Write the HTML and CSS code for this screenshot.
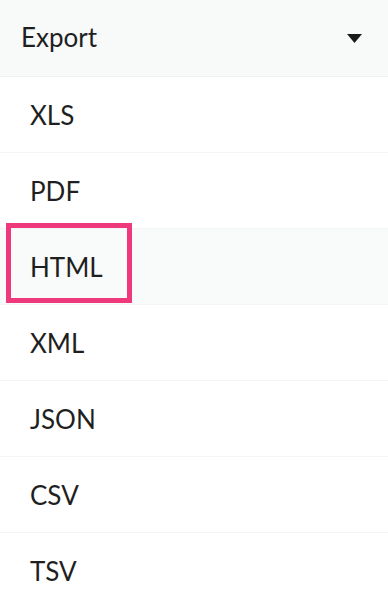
FILE: index.html
```html
<!DOCTYPE html>
<html>
<head>
  <title>Export</title>
  <link rel="stylesheet" href="styles.css">
</head>
<body>
  <div class="dropdown">
    <div class="dropdown-head">
      <span class="head-label">Export</span>
      <svg class="caret" width="15" height="9" viewBox="0 0 15 9"><path d="M0 0H15L7.5 9Z" fill="#1a1a1a"/></svg>
    </div>
    <ul class="menu">
      <li><span>XLS</span></li>
      <li><span>PDF</span></li>
      <li class="active"><span>HTML</span></li>
      <li><span>XML</span></li>
      <li><span>JSON</span></li>
      <li><span>CSV</span></li>
      <li><span>TSV</span></li>
    </ul>
  </div>
</body>
</html>
```

FILE: styles.css
```css
body {
  margin: 0;
  font-family: Lato, "Noto Sans", sans-serif;
  color: #1f1f1f;
  background-color: #fff;
}

.dropdown-head {
  height: 76px;
  padding: 0 26px 0 21px;
  display: flex;
  align-items: center;
  justify-content: space-between;
  background-color: #f8f9f9;
  border-bottom: 1px solid #eeefef;
  font-size: 26px;
}

.head-label {
  margin-top: -3px;
}

.menu {
  list-style: none;
  margin: 0;
  padding: 0;
}

.menu li {
  height: 75px;
  display: flex;
  align-items: center;
  padding-left: 30px;
  border-bottom: 1px solid #f3f4f4;
  font-size: 26px;
}

.menu li.active {
  background-color: #f9fafa;
  position: relative;
}

.menu li.active::after {
  content: "";
  position: absolute;
  left: 6px;
  top: -6px;
  width: 116px;
  height: 70px;
  border: 5px solid #ee3a7c;
}
```
